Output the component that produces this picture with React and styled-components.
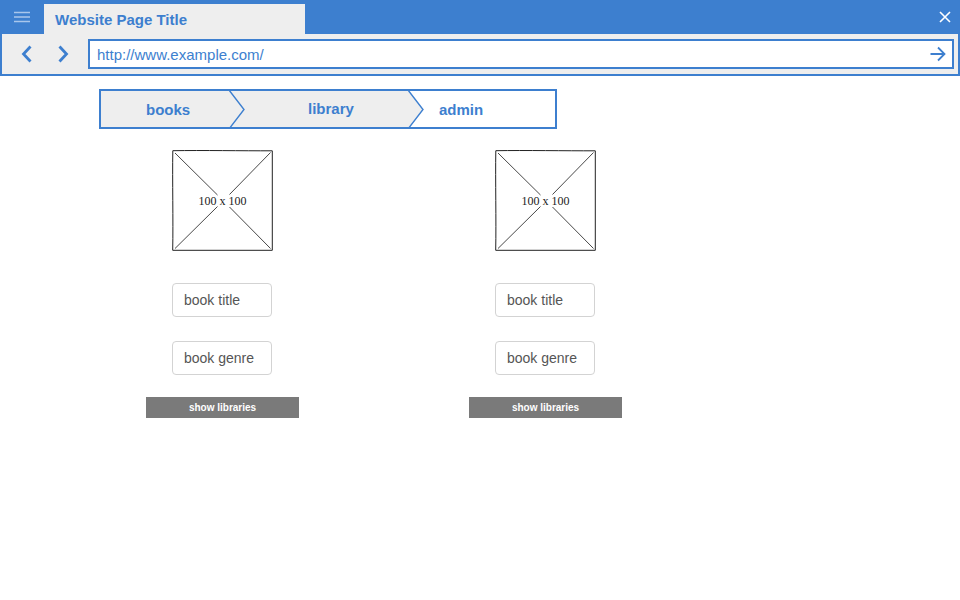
import styled, { createGlobalStyle } from 'styled-components';

const GlobalStyle = createGlobalStyle`
  html, body {
    margin: 0;
    padding: 0;
    background: #fff;
  }
  body {
    font-family: 'Liberation Sans', Arial, sans-serif;
  }
`;

const blue = '#3d7fcf';

const Window = styled.div`
  background: ${blue};
  padding: 0 2px 2px;
  width: 960px;
  box-sizing: border-box;
`;

const TitleBar = styled.div`
  display: flex;
  align-items: flex-end;
  height: 34px;
  margin: 0 -2px;
`;

const MenuButton = styled.div`
  width: 44px;
  height: 34px;
  display: flex;
  align-items: center;
  justify-content: center;
  box-sizing: border-box;
`;

const Tab = styled.div`
  width: 261px;
  height: 30px;
  background: #eeeeee;
  color: ${blue};
  font-weight: bold;
  font-size: 15px;
  line-height: 31px;
  padding-left: 11px;
  box-sizing: border-box;
`;

const CloseButton = styled.div`
  margin-left: auto;
  width: 30px;
  height: 34px;
  display: flex;
  align-items: center;
  justify-content: center;
  box-sizing: border-box;
`;

const Toolbar = styled.div`
  background: #eeeeee;
  height: 40px;
  display: flex;
  align-items: center;
  padding: 0 4px 0 0;
`;

const NavButton = styled.div`
  width: 36px;
  height: 30px;
  display: flex;
  align-items: center;
  justify-content: center;
  margin-left: ${p => p.$first ? '7px' : '0'};
`;

const UrlField = styled.div`
  margin-left: 7px;
  flex: 1;
  height: 30px;
  box-sizing: border-box;
  border: 2px solid ${blue};
  background: #fff;
  display: flex;
  align-items: center;
  padding: 0 6px 0 7px;
  color: ${blue};
  font-size: 15px;
`;

const UrlText = styled.span`
  flex: 1;
`;

const Content = styled.div`
  padding: 13px 0 0 99px;
`;

const Breadcrumb = styled.div`
  display: flex;
  width: 458px;
  height: 40px;
  box-sizing: border-box;
  border: 2px solid ${blue};
  background: #fff;
`;

const Crumb = styled.div`
  position: relative;
  width: ${p => p.$width}px;
  padding-left: ${p => p.$pad}px;
  box-sizing: border-box;
  background: ${p => p.$active ? '#fff' : '#eeeeee'};
  color: ${blue};
  font-weight: bold;
  font-size: 15px;
  line-height: ${p => p.$lh || 37}px;
  z-index: ${p => p.$z};
`;

const CrumbArrow = styled.svg`
  position: absolute;
  right: -16px;
  top: 0;
  width: 16px;
  height: 36px;
`;

const Columns = styled.div`
  display: flex;
  gap: 170px;
  padding-left: 47px;
  margin-top: 21px;
`;

const Column = styled.div`
  width: 153px;
  display: flex;
  flex-direction: column;
  align-items: flex-start;
`;

const Placeholder = styled.svg`
  width: 101px;
  height: 101px;
  margin: 0 0 32px 26px;
  display: block;
`;

const Field = styled.div`
  width: 100px;
  height: 34px;
  box-sizing: border-box;
  border: 1px solid #d3d3d3;
  border-radius: 4px;
  padding-left: 11px;
  margin-left: 26px;
  font-size: 14px;
  line-height: 32px;
  color: #555;
  margin-bottom: ${p => p.$mb}px;
`;

const Button = styled.div`
  width: 153px;
  height: 21px;
  background: #7a7a7a;
  color: #fff;
  font-weight: bold;
  font-size: 10px;
  line-height: 21px;
  text-align: center;
`;

const ImagePlaceholder = () => (
  <Placeholder viewBox="-0.5 -0.5 101 101">
    <path
      d="M0.3 0.2 C30 -0.3 70 0.4 99.8 0.3 L99.8 99.8 L0.2 99.8 C0.8 70 -0.2 30 0.3 0.2 Z"
      fill="#fff"
      stroke="#222"
      strokeWidth="1"
    />
    <path d="M2.5 2.5 L45 44.5 M57 56.5 L98 98" stroke="#333" strokeWidth="0.9" fill="none" />
    <path d="M98 2 L57 44 M45 56 L2.5 98" stroke="#333" strokeWidth="0.9" fill="none" />
    <text
      x="50"
      y="54"
      textAnchor="middle"
      fontFamily="'Liberation Serif', 'Times New Roman', serif"
      fontSize="12"
      fill="#222"
    >
      100 x 100
    </text>
  </Placeholder>
);

const BookCard = () => (
  <Column>
    <ImagePlaceholder />
    <Field $mb={24}>book title</Field>
    <Field $mb={22}>book genre</Field>
    <Button>show libraries</Button>
  </Column>
);

const Arrow = ({ fill }) => (
  <CrumbArrow viewBox="0 0 16 36">
    <path d="M0 0 L15 18.5 L0 37 Z" fill={fill} />
    <path d="M0 -1 L15 18.5 L0 38" fill="none" stroke={blue} strokeWidth="1.4" />
  </CrumbArrow>
);

export default function App() {
  return (
    <>
      <GlobalStyle />
      <Window>
        <TitleBar>
          <MenuButton>
            <svg width="18" height="12" viewBox="0 0 18 12">
              <path d="M1 1.5 H17 M1 6 H17 M1 10.5 H17" stroke="#a9c6ec" strokeWidth="1.6" />
            </svg>
          </MenuButton>
          <Tab>Website Page Title</Tab>
          <CloseButton>
            <svg width="12" height="12" viewBox="0 0 12 12">
              <path d="M1 1 L11 11 M11 1 L1 11" stroke="#fff" strokeWidth="1.6" />
            </svg>
          </CloseButton>
        </TitleBar>
        <Toolbar>
          <NavButton $first>
            <svg width="12" height="18" viewBox="0 0 12 18">
              <path d="M9.5 1.5 L2.5 9 L9.5 16.5" stroke={blue} strokeWidth="2.8" fill="none" />
            </svg>
          </NavButton>
          <NavButton>
            <svg width="12" height="18" viewBox="0 0 12 18">
              <path d="M2.5 1.5 L9.5 9 L2.5 16.5" stroke={blue} strokeWidth="2.8" fill="none" />
            </svg>
          </NavButton>
          <UrlField>
            <UrlText>http://www.example.com/</UrlText>
            <svg width="16" height="16" viewBox="0 0 16 16">
              <path d="M0.5 8 H14.5 M8 1.5 L14.5 8 L8 14.5" stroke={blue} strokeWidth="1.8" fill="none" />
            </svg>
          </UrlField>
        </Toolbar>
      </Window>
      <Content>
        <Breadcrumb>
          <Crumb $width={128} $pad={45} $z={3}>
            books
            <Arrow fill="#eeeeee" />
          </Crumb>
          <Crumb $width={179} $pad={79} $z={2} $lh={35}>
            library
            <Arrow fill="#eeeeee" />
          </Crumb>
          <Crumb $width={147} $pad={31} $z={1} $active>
            admin
          </Crumb>
        </Breadcrumb>
        <Columns>
          <BookCard />
          <BookCard />
        </Columns>
      </Content>
    </>
  );
}
